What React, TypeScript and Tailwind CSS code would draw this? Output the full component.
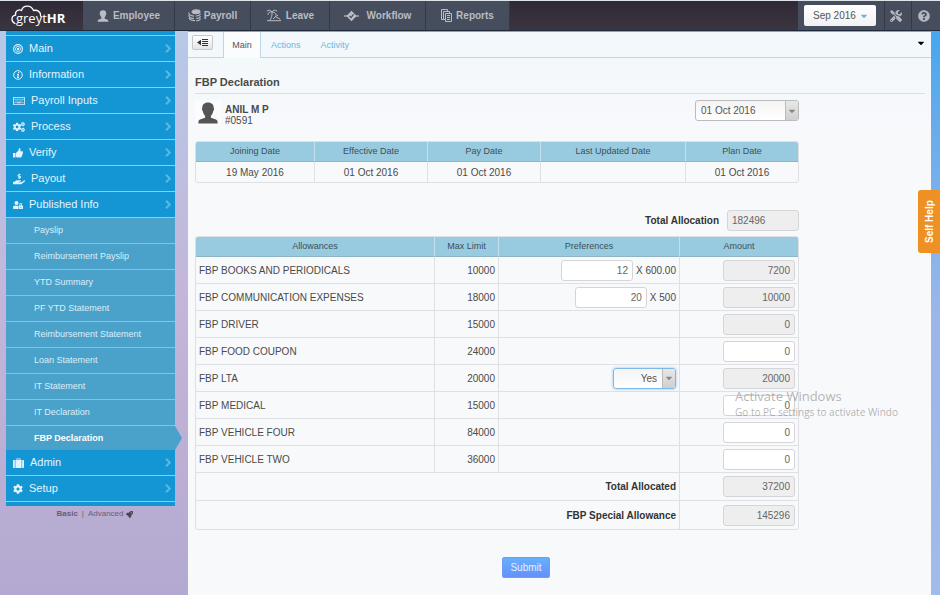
import type { ReactNode } from "react";
import {
  FaCaretDown,
  FaCog,
  FaCogs,
  FaHandHoldingUsd,
  FaQuestionCircle,
  FaRocket,
  FaTools,
  FaUserLock,
  FaRegKeyboard,
} from "react-icons/fa";

function CloudLogo() {
  return (
    <a
      href="#home"
      aria-label="greytHR home"
      className="relative flex w-[83px] shrink-0 items-end pb-[2px] pl-4 font-['Open_Sans',sans-serif] text-[13px] leading-5 text-white"
    >
      <svg className="absolute top-[3px] left-[10px] h-[22px] w-[34px]" viewBox="0 0 34 22" fill="none" stroke="#fff" strokeWidth="1.3" strokeLinecap="round">
        <path d="M5 19.500C1 18 .8 12 5.500 11.200C5 6.500 9 5 11.500 6.500C13 1 21 .5 23.500 6.500C27.500 5.500 31 8 30.600 12" />
      </svg>
      <span>
        greyt<b>HR</b>
      </span>
    </a>
  );
}

function PersonIcon({ className }: { className: string }) {
  return (
    <svg className={className} viewBox="0 0 24 26" fill="currentColor">
      <path d="M12 .5c4.700 0 7 2.800 6.800 6.500.8.3.7 2.500-.5 3.500-.5 2.700-1.500 4.500-2.800 5.800v2.200c1.300 1.500 7.200 1.700 7.800 4l.4 3H.3l.4-3c.6-2.300 6.500-2.500 7.800-4v-2.200C7.200 15 6.200 13.200 5.700 10.500 4.500 9.500 4.400 7.300 5.200 7 5 3.300 7.300.5 12 .5z" />
    </svg>
  );
}

function CoinsIcon() {
  return (
    <svg className="h-[13px] w-[13px]" viewBox="0 0 13 13" fill="none" stroke="currentColor" strokeWidth="1.100">
      <ellipse cx="8" cy="2.800" rx="4" ry="1.900" fill="currentColor" />
      <path d="M12.300 4.600c0 1.800-2.500 2.500-4.500 2.300M12.300 7c0 1.800-2 2.500-4 2.300M12.300 9.400c0 1.800-2 2.400-4 2.200" />
      <path d="M.7 3.500c0 2 1.500 3.200 5.300 3.600M.7 6c0 2 1.500 3.200 5.300 3.600M1 8.700c.8 1.800 3 2.900 6 2.900" />
    </svg>
  );
}

function PalmIcon() {
  return (
    <svg className="h-[13px] w-[16px]" viewBox="0 0 16 13" fill="none" stroke="currentColor" strokeWidth="1">
      <path d="M6 3C4.500.8 2.300.6.800 2.300M6 3C3.500 2.500 2 3.800 2 6M6 3c1-2 3.500-2.400 5.200-.8M6 3c2.500 0 3.800 1.200 4.200 3M6 3c.3 3-.6 6-2.300 8.500M1 11.700h14M7 10l2.500-2.300 4.800 2.600M9 7.500l3-1.300" />
    </svg>
  );
}

function WorkflowIcon() {
  return (
    <svg className="h-[12px] w-[15px]" viewBox="0 0 15 12">
      <path d="M0 6h15" stroke="currentColor" strokeWidth="1.200" />
      <path d="M7.500.8 12.700 6l-5.200 5.200L2.300 6z" fill="currentColor" />
      <path d="m5.500 6 1.500 1.600 2.600-3.200" fill="none" stroke="#464d5c" strokeWidth="1.200" />
    </svg>
  );
}

function ReportsIcon() {
  return (
    <svg className="h-[13px] w-[11px]" viewBox="0 0 11 13" fill="none" stroke="currentColor">
      <path d="M2.500 10.500h-2v-10h6v1.500M4 10.500H2.500v-8h6V4" />
      <path d="M4.500 4.500h6v8h-6zM6 6.500h3M6 8.500h3M6 10.500h3" />
    </svg>
  );
}

function TargetIcon() {
  return (
    <svg className="h-[10px] w-[10px]" viewBox="0 0 10 10" fill="none" stroke="currentColor">
      <circle cx="5" cy="5" r="4.400" strokeWidth="1.100" />
      <circle cx="5" cy="5" r="2.600" strokeWidth=".8" />
      <circle cx="5" cy="5" r="1.200" fill="currentColor" stroke="none" />
    </svg>
  );
}

function InfoIcon() {
  return (
    <svg className="h-[10px] w-[10px]" viewBox="0 0 10 10" fill="none" stroke="currentColor">
      <circle cx="5" cy="5" r="4.300" />
      <path d="M5.600 2v1.200M4 4.500h1.300L4.700 7.500H6" strokeWidth="1.200" />
    </svg>
  );
}

function ThumbIcon() {
  return (
    <svg className="h-[10px] w-[10px]" viewBox="0 0 10 10" fill="currentColor">
      <path d="M0 5h2.400v4.500H0zM2.900 5 5.500 2.500 6 .3c1.400-.2 1.900.9 1.200 3h2.200c.8.3.7 1 .3 1.400.3.6.1 1.100-.3 1.400.2.6 0 1.100-.4 1.300.1.6-.1 1-.4 1.200 0 .7-.5.9-1 .9H4.800L2.900 9z" />
    </svg>
  );
}

function CaseIcon() {
  return (
    <svg className="h-[10px] w-[11px]" viewBox="0 0 11 10" fill="currentColor">
      <path d="M3.500 2V.5h4V2H6.700v-.7H4.300V2zM0 3c0-.6.400-1 1-1h.8v8H1c-.6 0-1-.4-1-1zM2.400 2h6.200v8H2.400zM9.200 2h.8c.6 0 1 .4 1 1v6c0 .6-.4 1-1 1h-.8z" />
    </svg>
  );
}

const topNav: { label: string; icon: ReactNode; className: string }[] = [
  { label: "Employee", icon: <PersonIcon className="h-[12px] w-[12px]" />, className: "w-[92px] gap-1" },
  { label: "Payroll", icon: <CoinsIcon />, className: "w-[76px] gap-[3px]" },
  { label: "Leave", icon: <PalmIcon />, className: "w-[79px] gap-1" },
  { label: "Workflow", icon: <WorkflowIcon />, className: "w-[96px] gap-2" },
  { label: "Reports", icon: <ReportsIcon />, className: "w-[84px] gap-1" },
];

const menuTop: { label: string; icon: ReactNode }[] = [
  { label: "Main", icon: <TargetIcon /> },
  { label: "Information", icon: <InfoIcon /> },
  { label: "Payroll Inputs", icon: <FaRegKeyboard className="size-[12px]" /> },
  { label: "Process", icon: <FaCogs className="size-[12px]" /> },
  { label: "Verify", icon: <ThumbIcon /> },
  { label: "Payout", icon: <FaHandHoldingUsd className="size-[12px]" /> },
  { label: "Published Info", icon: <FaUserLock className="size-[10px]" /> },
];

const published = [
  "Payslip",
  "Reimbursement Payslip",
  "YTD Summary",
  "PF YTD Statement",
  "Reimbursement Statement",
  "Loan Statement",
  "IT Statement",
  "IT Declaration",
];

const menuBottom: { label: string; icon: ReactNode }[] = [
  { label: "Admin", icon: <CaseIcon /> },
  { label: "Setup", icon: <FaCog className="size-[10px]" /> },
];

// The last column takes whatever width is left.
const dates = [
  { label: "Joining Date", value: "19 May 2016", className: "w-[119px]" },
  { label: "Effective Date", value: "01 Oct 2016", className: "w-[113px]" },
  { label: "Pay Date", value: "01 Oct 2016", className: "w-[113px]" },
  { label: "Last Updated Date", value: "", className: "w-[145px]" },
  { label: "Plan Date", value: "01 Oct 2016", className: "" },
];

interface Allowance {
  name: string;
  max: number;
  amount: number;
  locked?: boolean;
  units?: number;
  rate?: string;
  choice?: boolean;
}

const allowances: Allowance[] = [
  { name: "FBP BOOKS AND PERIODICALS", max: 10000, amount: 7200, locked: true, units: 12, rate: "600.00" },
  { name: "FBP COMMUNICATION EXPENSES", max: 18000, amount: 10000, locked: true, units: 20, rate: "500" },
  { name: "FBP DRIVER", max: 15000, amount: 0, locked: true },
  { name: "FBP FOOD COUPON", max: 24000, amount: 0 },
  { name: "FBP LTA", max: 20000, amount: 20000, locked: true, choice: true },
  { name: "FBP MEDICAL", max: 15000, amount: 0 },
  { name: "FBP VEHICLE FOUR", max: 84000, amount: 0 },
  { name: "FBP VEHICLE TWO", max: 36000, amount: 0 },
];

function MenuItem({ label, icon }: { label: string; icon: ReactNode }) {
  return (
    <li>
      <a href="#menu" className="flex h-[26px] items-center gap-[6px] border-b border-[#8fcdec] bg-[#1496d4] pr-1 pl-[7px] text-[11px] text-[#e4f4fc]">
        {icon}
        <span className="flex-1">{label}</span>
        <svg className="h-[9px] w-[6px]" viewBox="0 0 6 9" fill="none" stroke="#58b8e6" strokeWidth="2">
          <path d="m1 .8 3.800 3.700L1 8.200" />
        </svg>
      </a>
    </li>
  );
}

function NumberBox({ label, value, locked, id }: { label?: string; value: number; locked?: boolean; id?: string }) {
  return (
    <input
      id={id}
      aria-label={label}
      defaultValue={value}
      readOnly={locked}
      className={`h-[21px] w-[72px] rounded-[3px] border border-[#d4d5d8] px-1 text-[10px] text-[#666] ${
        locked ? "bg-[#eeeeee]" : "bg-white"
      } ${id ? "text-left" : "text-right"}`}
    />
  );
}

function ChosenSelect({ label, value, className, selectClass }: { label: string; value: string; className: string; selectClass: string }) {
  return (
    <span className={`relative inline-flex h-[21px] overflow-hidden rounded-[3px] border bg-linear-to-b from-[#f4f4f4] to-white ${className}`}>
      <select aria-label={label} className={`w-full appearance-none text-[10px] text-[#555] outline-none ${selectClass}`}>
        <option>{value}</option>
      </select>
      <span className="pointer-events-none absolute inset-y-0 right-0 flex w-[13px] items-center justify-center border-l border-[#bbb] bg-linear-to-b from-[#e8e8e8] to-[#cfcfcf]">
        <FaCaretDown className="size-[10px] text-[#888]" />
      </span>
    </span>
  );
}

function Header() {
  return (
    <header className="flex h-[31px] border-t border-b border-t-[#dfe3ea] border-b-[#1f2b3c] bg-linear-to-b from-[#2f2935] to-[#3a3640]">
      <CloudLogo />
      <nav className="flex">
        {topNav.map((item) => (
          <a
            key={item.label}
            href="#nav"
            className={`flex items-center justify-center border-r border-[#333946] bg-[#464d5c] text-[10px] font-bold text-[#b9bcc4] ${item.className}`}
          >
            {item.icon}
            {item.label}
          </a>
        ))}
      </nav>
      <div className="ml-auto flex bg-[#464d5c] pl-[6px] text-[#b4b7bf]">
        <span className="relative mr-2 flex items-center">
          <select aria-label="Payroll month" className="h-[21px] w-[72px] appearance-none rounded-[2px] bg-linear-to-b from-white to-[#f0f1f3] pl-[9px] text-[10px] text-[#555]">
            <option>Sep 2016</option>
          </select>
          <FaCaretDown className="pointer-events-none absolute right-[7px] size-[10px] text-[#6db3e0]" />
        </span>
        <button aria-label="Tools" className="flex w-[27px] items-center justify-center border-l border-[#333946] pr-1">
          <FaTools className="size-3" />
        </button>
        <button aria-label="Help" className="flex w-[29px] items-center justify-center border-l border-[#333946] pr-1">
          <FaQuestionCircle className="size-3" />
        </button>
      </div>
    </header>
  );
}

function Sidebar() {
  return (
    <aside className="w-[188px] shrink-0 pr-[13px] pl-[6px]">
      <ul className="border-t-[5px] border-b-[4px] border-[#1496d4]">
        {/* thin rule that closes the top strip */}
        <li className="-mt-px h-px bg-[#8fcdec]" />
        {menuTop.map((item) => (
          <MenuItem key={item.label} {...item} />
        ))}
        <li>
          <ul>
            {published.map((label) => (
              <li key={label}>
                <a href="#published" className="flex h-[26px] items-center border-b border-[#8ac2dd] bg-[#4aa2cb] pl-7 text-[9px] text-[#dceef7]">
                  {label}
                </a>
              </li>
            ))}
            <li className="relative">
              <a href="#fbp" aria-current="page" className="flex h-6 items-center bg-[#4aa2cb] pl-7 text-[9px] font-bold text-white">
                FBP Declaration
              </a>
              <svg className="absolute top-0 left-full h-6 w-[7px]" viewBox="0 0 7 24" fill="#4aa2cb">
                <path d="M0 0 7 12 0 24z" />
              </svg>
            </li>
          </ul>
        </li>
        {menuBottom.map((item) => (
          <MenuItem key={item.label} {...item} />
        ))}
      </ul>
      <p className="flex items-center justify-center gap-1 pt-[3px] pl-2 text-[8px] leading-[10px] text-[#666074]">
        <b>Basic</b>
        <span>|</span>
        <a href="#advanced" className="flex items-center gap-[2px]">
          Advanced <FaRocket className="size-[7px] text-[#4c4658]" />
        </a>
      </p>
    </aside>
  );
}

const headCell = "h-[20px] border-b border-b-[#8fb4c4] bg-[#98cbdf] text-[9px] font-normal text-[#3d4f58]";
const line = "border-[#dfe0e4]";

function DateTable() {
  return (
    <table className={`mt-[15px] w-full table-fixed border-separate border-spacing-0 overflow-hidden rounded-[3px] border text-center ${line}`}>
      <thead>
        <tr>
          {dates.map((d) => (
            <th key={d.label} className={`${headCell} ${d.className} border-r border-r-[#c4e0ec] last:border-r-0`}>
              {d.label}
            </th>
          ))}
        </tr>
      </thead>
      <tbody>
        <tr>
          {dates.map((d) => (
            <td key={d.label} className={`h-[20px] border-r last:border-r-0 ${line}`}>
              {d.value}
            </td>
          ))}
        </tr>
      </tbody>
    </table>
  );
}

function AllowanceTable() {
  return (
    <table className={`mt-[5px] w-full table-fixed border-separate border-spacing-0 overflow-hidden rounded-[3px] border ${line}`}>
      <thead>
        <tr>
          <th className={`${headCell} w-[239px] border-r border-r-[#c4e0ec]`}>Allowances</th>
          <th className={`${headCell} w-[64px] border-r border-r-[#c4e0ec]`}>Max Limit</th>
          <th className={`${headCell} w-[181px] border-r border-r-[#c4e0ec]`}>Preferences</th>
          <th className={headCell}>Amount</th>
        </tr>
      </thead>
      <tbody>
        {allowances.map((a) => (
          <tr key={a.name}>
            <td className={`h-[27px] border-r border-b pl-[3px] ${line}`}>{a.name}</td>
            <td className={`border-r border-b pr-[3px] text-right ${line}`}>{a.max}</td>
            <td className={`border-r border-b pr-[3px] ${line}`}>
              <div className="flex items-center justify-end gap-[3px]">
                {a.units !== undefined && (
                  <>
                    <NumberBox label={`${a.name} units`} value={a.units} />
                    <span>X {a.rate}</span>
                  </>
                )}
                {a.choice && (
                  <ChosenSelect
                    label={`${a.name} preference`}
                    value="Yes"
                    className="w-[63px] border-[#7fb8e4] shadow-[0_0_3px_#8ec4ea]"
                    selectClass="pr-[18px] [text-align-last:right]"
                  />
                )}
              </div>
            </td>
            <td className={`border-b pr-[3px] ${line}`}>
              <div className="flex justify-end">
                <NumberBox label={`${a.name} amount`} value={a.amount} locked={a.locked} />
              </div>
            </td>
          </tr>
        ))}
      </tbody>
      <tfoot>
        {[
          { label: "Total Allocated", value: 37200 },
          { label: "FBP Special Allowance", value: 145296 },
        ].map((t) => (
          <tr key={t.label} className="group">
            <th colSpan={3} className={`h-[28px] border-r border-b pr-[3px] text-right font-bold text-[#333] group-last:border-b-0 ${line}`}>
              {t.label}
            </th>
            <td className={`border-b pr-[3px] group-last:border-b-0 ${line}`}>
              <div className="flex justify-end">
                <NumberBox label={t.label} value={t.value} locked />
              </div>
            </td>
          </tr>
        ))}
      </tfoot>
    </table>
  );
}

export default function App() {
  return (
    <div className="relative flex min-h-screen flex-col overflow-hidden bg-linear-to-b from-[#b5cbea] via-[#c3b6da] to-[#b4a9d0] font-['Liberation_Sans',Arial,sans-serif] text-[10px] leading-[11px] text-[#4a4a4a]">
      <Header />
      <div className="flex flex-1">
        <Sidebar />
        <main className="min-w-0 flex-1 bg-linear-to-b from-[#f2f8fc] via-[#f8f9fb] via-20% to-[#f8f9fb]">
          <div className="flex h-[27px] border-t border-b border-t-[#5fb0e0] border-b-[#bcd8e8]">
            <div className="w-9 border-r border-[#bcd8e8] pt-[3px] pl-1">
              <button aria-label="Collapse menu" className="flex h-[15px] w-[21px] items-center justify-center rounded-[2px] border border-[#c8c8c8] bg-linear-to-b from-white to-[#e6e6e6]">
                <svg className="h-[7px] w-[11px]" viewBox="0 0 11 7" fill="#333">
                  <path d="M0 3.500 4 .8v5.400zM5 0h6v1H5zM5 2h6v1H5zM5 4h6v1H5zM5 6h6v1H5z" />
                </svg>
              </button>
            </div>
            <nav className="flex flex-1 text-[9px] text-[#6bb7df]">
              <a href="#main" className="-mb-px flex w-[37px] items-center justify-center border-r border-[#bcd8e8] bg-[#fbfcfd] text-[#555]">
                Main
              </a>
              <a href="#actions" className="flex items-center pt-px pl-[10px]">
                Actions
              </a>
              <a href="#activity" className="flex items-center pt-px pl-5">
                Activity
              </a>
            </nav>
            <button aria-label="More" className="mr-[5px] mb-1">
              <FaCaretDown className="size-[10px] text-black" />
            </button>
          </div>

          <div className="pr-[6px] pl-[7px]">
            <h1 className="border-b border-[#cfe3ef] pt-4 pb-[3px] text-[11px] leading-4 font-bold">FBP Declaration</h1>
            <form className="max-w-[604px]" onSubmit={(e) => e.preventDefault()}>
              <div className="flex items-start gap-1 pt-[6px]">
                <span className="flex h-[26px] w-[26px] items-center justify-center bg-[#fcfcfd]">
                  <PersonIcon className="h-[22px] w-5 text-[#555]" />
                </span>
                <p className="flex-1 pt-1">
                  <b>ANIL M P</b>
                  <br />
                  #0591
                </p>
                <ChosenSelect label="Plan date" value="01 Oct 2016" className="w-[104px] border-[#bbb]" selectClass="pl-[5px]" />
              </div>

              <DateTable />

              <div className="mt-[27px] flex items-center justify-end gap-2">
                <label htmlFor="total-allocation" className="font-bold text-[#333]">
                  Total Allocation
                </label>
                <NumberBox id="total-allocation" value={182496} locked />
              </div>

              <AllowanceTable />

              <button
                type="submit"
                className="mt-[27px] ml-[307px] h-[21px] w-[48px] rounded-[2px] border border-[#6a9ef0] bg-linear-to-b from-[#66b0fc] to-[#6490fa] text-[#e6f0ff]"
              >
                Submit
              </button>
            </form>
          </div>
        </main>
        <div className="w-[9px] shrink-0 bg-linear-to-b from-[#45a6ee] via-[#9ab6ea] via-50% to-[#a0bcea]" />
      </div>

      <a
        href="#help"
        className="absolute top-[190px] right-0 flex h-[63px] w-[22px] rotate-180 items-center justify-center rounded-r-[3px] bg-[#ef9122] font-bold text-white [writing-mode:vertical-rl]"
      >
        Self Help
      </a>

      <div className="pointer-events-none absolute top-[388px] left-[735px] font-['Open_Sans',sans-serif] whitespace-nowrap text-[#777]/55">
        <p className="text-[13px] leading-[17px]">Activate Windows</p>
        <p className="text-[10px] leading-[15px]">Go to PC settings to activate Windo</p>
      </div>
    </div>
  );
}
